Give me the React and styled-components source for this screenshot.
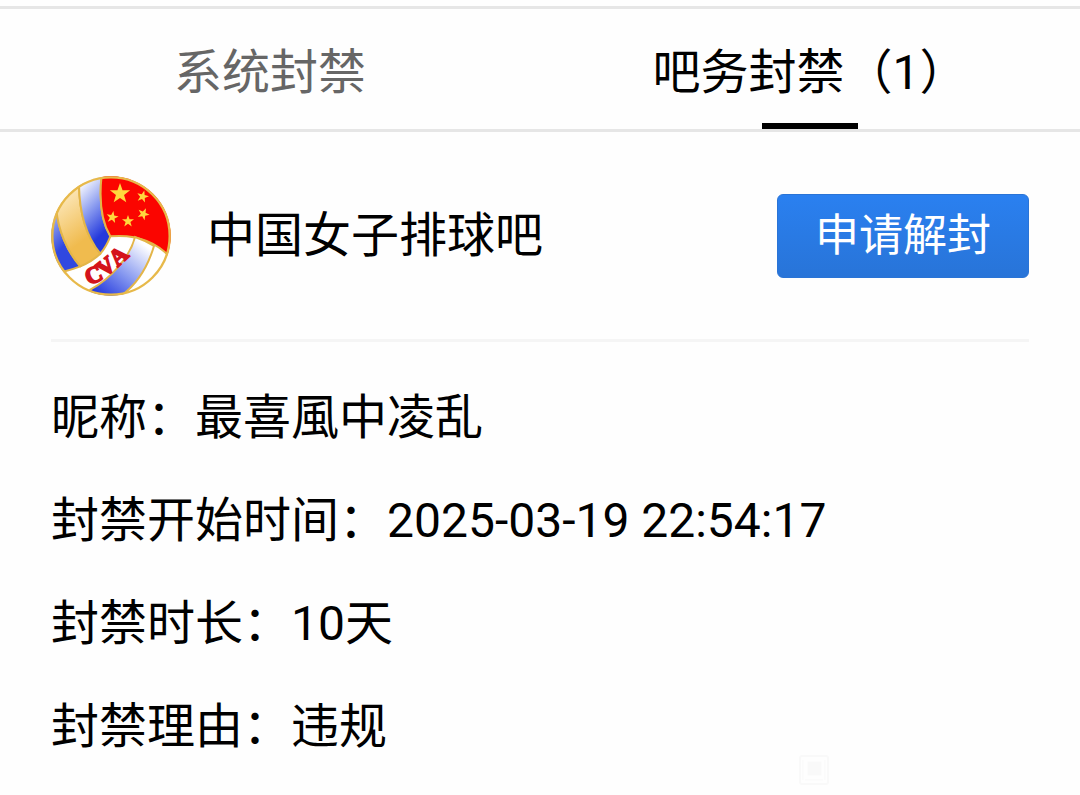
import React, { useState } from "react";
import styled, { createGlobalStyle } from "styled-components";

const GlobalStyle = createGlobalStyle`
  * {
    box-sizing: border-box;
  }
  body {
    margin: 0;
    background: #fefefe;
    color: #000;
    font-family: Roboto, "Noto Sans CJK SC", sans-serif;
    font-size: 48px;
    line-height: 56px;
  }
`;

const Page = styled.div`
  padding-top: 6px;
`;
const TabBar = styled.div`
  display: flex;
  border-top: 3px solid #e6e6e6;
  border-bottom: 3px solid #e6e6e6;
`;
const Tab = styled.button`
  position: relative;
  flex: 1;
  height: 120px;
  padding: 8px 0 0;
  border: 0;
  background: none;
  color: ${(props) => (props.$active ? "#000" : "#666")};
  font: inherit;
  cursor: pointer;
  &::after {
    content: "";
    display: ${(props) => (props.$active ? "block" : "none")};
    position: absolute;
    bottom: 0;
    left: 50%;
    width: 96px;
    height: 6px;
    margin-left: -48px;
    background: #000;
  }
`;
const Panel = styled.main`
  padding: 0 51px;
`;
const ForumHeader = styled.header`
  display: flex;
  align-items: center;
  gap: 36px;
  padding: 44px 0 43px;
  border-bottom: 3px solid #f5f5f5;
`;
const Logo = styled.svg`
  flex: none;
  width: 120px;
  height: 120px;
`;
const ForumName = styled.h1`
  flex: 1;
  margin: 0;
  font-size: 48px;
  font-weight: 400;
`;
const AppealButton = styled.button`
  height: 84px;
  padding: 0 37px;
  border: 1px solid #2a74d6;
  border-radius: 6px;
  background: linear-gradient(#2a80f0, #2874d8);
  color: #fff;
  font-family: inherit;
  font-size: 44px;
  line-height: 56px;
  cursor: pointer;
`;
const Details = styled.dl`
  display: flex;
  flex-direction: column;
  gap: 47px;
  margin: 0;
  padding: 48px 0 0;
`;
const DetailRow = styled.div`
  display: flex;
`;
const Term = styled.dt`
  flex: none;
`;
const Value = styled.dd`
  margin: 0;
`;
const Footer = styled.footer`
  display: flex;
  justify-content: flex-end;
  padding-right: 200px;
`;
const Stamp = styled.svg`
  width: 30px;
  height: 30px;
`;

const tabs = [
  { id: "system", title: "系统封禁" },
  { id: "forum", title: "吧务封禁（1）" },
];

const details = [
  { label: "昵称：", value: "最喜風中凌乱" },
  { label: "封禁开始时间：", value: "2025-03-19 22:54:17" },
  { label: "封禁时长：", value: "10天" },
  { label: "封禁理由：", value: "违规" },
];

const STAR =
  "M0 -10 L2.4 -3.2 L9.5 -3.1 L3.8 1.2 L5.9 8.1 L0 4 L-5.9 8.1 L-3.8 1.2 L-9.5 -3.1 L-2.4 -3.2Z";

const stars = [
  { x: 240, y: 86, size: 3.2, turn: 0 },
  { x: 308, y: 95, size: 1.9, turn: 15 },
  { x: 310, y: 147, size: 1.9, turn: 25 },
  { x: 217, y: 157, size: 1.9, turn: 10 },
  { x: 264, y: 169, size: 1.9, turn: 0 },
];

const VolleyballLogo = () => (
  <Logo viewBox="33 33 360 360" aria-hidden="true">
    <defs>
      <clipPath id="ball">
        <circle cx="213" cy="213" r="179" />
      </clipPath>
      <linearGradient id="blueLeft" x1="0" y1="0" x2="0.5" y2="1">
        <stop offset="0.1" stopColor="#a9b6f2" />
        <stop offset="0.65" stopColor="#3048e0" />
      </linearGradient>
      <linearGradient id="blueTop" x1="0" y1="0" x2="0.4" y2="1">
        <stop offset="0.1" stopColor="#fff" />
        <stop offset="0.5" stopColor="#8c9df0" />
        <stop offset="0.9" stopColor="#2439dc" />
      </linearGradient>
      <linearGradient id="gold" x1="0" y1="0" x2="0.4" y2="1">
        <stop offset="0" stopColor="#fff2d4" />
        <stop offset="0.8" stopColor="#f0bb4e" />
      </linearGradient>
      <linearGradient id="blueBottom" x1="1" y1="0" x2="0.2" y2="1">
        <stop offset="0.15" stopColor="#fff" />
        <stop offset="0.6" stopColor="#8799f0" />
        <stop offset="1" stopColor="#2439dd" />
      </linearGradient>
    </defs>
    <g clipPath="url(#ball)" stroke="#e3b548" strokeWidth="6">
      <rect x="33" y="33" width="360" height="360" fill="#fff" />
      <path
        d="M30 140 L49 132 C54 195 82 260 121 304 Q98 313 70 320 L30 320Z"
        fill="url(#blueLeft)"
      />
      <path
        d="M49 132 Q75 83 117 59 C118 145 142 218 181 266 Q155 290 121 304 C82 260 54 195 49 132Z"
        fill="url(#gold)"
      />
      <path
        d="M117 59 Q145 38 185 30 C178 95 181 165 211 214 Q199 245 181 266 C142 218 118 145 117 59Z"
        fill="url(#blueTop)"
      />
      <path
        d="M185 30 L400 30 L400 276 L388 274 C345 229 287 207 211 214 C181 165 178 95 185 30Z"
        fill="#fb0500"
      />
      <path
        d="M285 216 C270 275 215 339 151 374 L151 400 L232 400 C290 363 322 310 342 243 Q315 226 285 216Z"
        fill="url(#blueBottom)"
      />
    </g>
    <g fill="#ffd83d">
      {stars.map((star) => (
        <path
          key={`${star.x}-${star.y}`}
          d={STAR}
          transform={`translate(${star.x} ${star.y}) rotate(${star.turn}) scale(${star.size})`}
        />
      ))}
    </g>
    <g
      fill="#d4141c"
      stroke="#d4141c"
      strokeWidth="5"
      fontFamily="'Liberation Serif', serif"
      fontWeight="700"
      fontSize="70"
      textAnchor="middle"
    >
      <text transform="translate(170 351) rotate(-24)">C</text>
      <text transform="translate(212 323) rotate(-38)">V</text>
      <text transform="translate(251 290) rotate(-43)">A</text>
    </g>
    <circle
      cx="213"
      cy="213"
      r="176"
      fill="none"
      stroke="#e7b94a"
      strokeWidth="7"
    />
  </Logo>
);

const App = () => {
  const [active, setActive] = useState("forum");

  return (
    <>
      <GlobalStyle />
      <Page>
        <TabBar role="tablist">
          {tabs.map((tab) => (
            <Tab
              key={tab.id}
              type="button"
              role="tab"
              aria-selected={active === tab.id}
              $active={active === tab.id}
              onClick={() => setActive(tab.id)}
            >
              {tab.title}
            </Tab>
          ))}
        </TabBar>
        <Panel>
          <ForumHeader>
            <VolleyballLogo />
            <ForumName>中国女子排球吧</ForumName>
            <AppealButton type="button">申请解封</AppealButton>
          </ForumHeader>
          <Details>
            {details.map((detail) => (
              <DetailRow key={detail.label}>
                <Term>{detail.label}</Term>
                <Value>{detail.value}</Value>
              </DetailRow>
            ))}
          </Details>
          <Footer>
            <Stamp viewBox="0 0 30 30" fill="none" stroke="#f9f9f9" aria-hidden="true">
              <rect x="1" y="1" width="28" height="28" rx="2" strokeWidth="2" />
              <rect x="9" y="7" width="13" height="13" fill="#f9f9f9" />
              <path d="M4 5v20M26 5v20M6 25h18" />
            </Stamp>
          </Footer>
        </Panel>
      </Page>
    </>
  );
};

export default App;
